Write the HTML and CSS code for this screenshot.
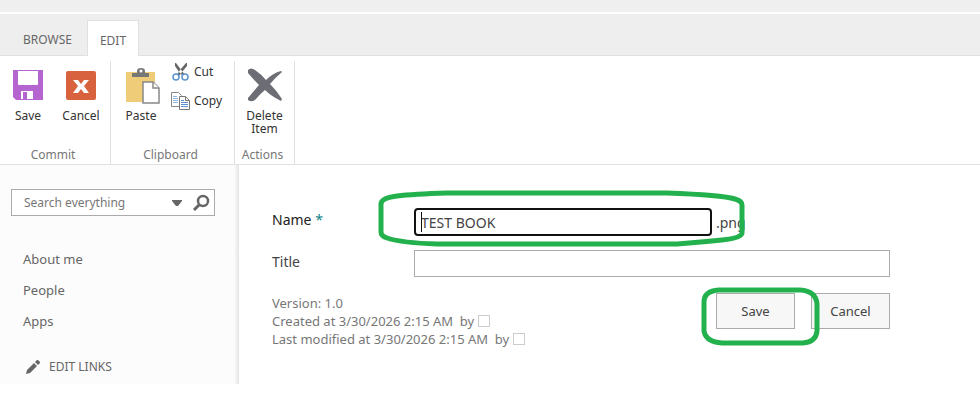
FILE: index.html
```html
<!DOCTYPE html>
<html lang="en">
<head>
    <meta charset="UTF-8">
    <meta name="viewport" content="width=device-width, initial-scale=1.0">
    <title>Edit Item</title>
    <link rel="stylesheet" href="styles.css">
</head>
<body>
    <div class="suite-bar"></div>

    <nav class="tabs">
        <a class="tab" href="#">BROWSE</a>
        <a class="tab tab-active" href="#">EDIT</a>
    </nav>

    <div class="ribbon">
        <section class="group group-commit">
            <div class="group-tools">
                <button type="button" class="tool tool-save">
                    <svg width="32" height="32" viewBox="0 0 32 32">
                        <path fill="#b565cf" d="M1 1h30v30H4l-3-3z"/>
                        <path fill="#fff" d="M6 2h20v13q0 1-1 1H7q-1 0-1-1z"/>
                        <path fill="#fff" d="M9 22h12v8H9z"/>
                        <path fill="#b565cf" d="M11 23h4v7h-4z"/>
                    </svg>
                    <span>Save</span>
                </button>
                <button type="button" class="tool tool-cancel">
                    <svg width="32" height="32" viewBox="0 0 32 32">
                        <rect x="1" y="2" width="30" height="29" rx="2" fill="#d8623e"/>
                        <path fill="#fff" d="M8 11h5l3 4 3-4h5l-5 6 5 7h-5l-3-4-3 4H8l5-7z"/>
                    </svg>
                    <span>Cancel</span>
                </button>
            </div>
            <div class="group-title">Commit</div>
        </section>

        <section class="group group-clipboard">
            <div class="group-tools">
                <button type="button" class="tool tool-paste">
                    <svg width="36" height="38" viewBox="0 0 36 38">
                        <path fill="#efcd78" d="M1 5h29v30H1z"/>
                        <path fill="#777" d="M7 10V6h5V4q0-3 4-3t4 3v2h4v4z"/>
                        <circle cx="16" cy="4" r="1.5" fill="#fff"/>
                        <path fill="#fff" stroke="#888" stroke-width="1.5" d="M18 15h10l6 6v15H18z"/>
                        <path fill="#fff" stroke="#888" stroke-width="1.5" d="M28 15v6h6"/>
                    </svg>
                    <span>Paste</span>
                </button>
                <div class="small-tools">
                    <button type="button" class="small-tool">
                        <svg width="20" height="20" viewBox="0 0 20 20">
                            <path fill="#666" d="M4 1h1l6 8 3 4h-3l-3-3-4-6zM16 1h-1l-6 7-3 5h3l2-3 5-6z"/>
                            <circle cx="5" cy="15" r="3" fill="none" stroke="#5c93cf" stroke-width="1.5"/>
                            <circle cx="14" cy="15" r="3" fill="none" stroke="#5c93cf" stroke-width="1.5"/>
                        </svg>
                        <span>Cut</span>
                    </button>
                    <button type="button" class="small-tool">
                        <svg width="20" height="20" viewBox="0 0 20 20">
                            <path fill="#fff" stroke="#888" d="M.5 1.5h7l3 3v11H.5z"/>
                            <path stroke="#8fb5de" d="M2 5.5h4M2 7.500h5M2 9.500h5M2 11.500h5"/>
                            <path fill="#fff" stroke="#777" d="M8.5 5.5h6l4 4v9h-10z"/>
                            <path fill="none" stroke="#777" d="M14.5 5.5v4h4"/>
                            <path stroke="#5c93cf" d="M10 9.500h3M10 11.500h7M10 13.500h7M10 15.500h7"/>
                        </svg>
                        <span>Copy</span>
                    </button>
                </div>
            </div>
            <div class="group-title">Clipboard</div>
        </section>

        <section class="group group-actions">
            <div class="group-tools">
                <button type="button" class="tool tool-delete">
                    <svg width="36" height="34" viewBox="0 0 36 34">
                        <path fill="#6d6d75" d="M1 2q3-3 7 0 6 4 11 10Q26 5 34 3l1 1Q29 9 23 16q7 7 12 15l-1 2q-10-5-16-11-5 4-9 9-4 4-8 1v-2Q7 23 12 17 6 11 1 5z"/>
                    </svg>
                    <span>Delete<br>Item</span>
                </button>
            </div>
            <div class="group-title">Actions</div>
        </section>
    </div>

    <div class="page">
        <aside class="sidebar">
            <form class="search">
                <input type="text" class="search-input" placeholder="Search everything" aria-label="Search everything">
                <button type="button" class="search-button" aria-label="Search scope">
                    <svg width="12" height="8" viewBox="0 0 12 8">
                        <path fill="#666" d="M1 1h10v1L7 7H5L1 2z"/>
                    </svg>
                </button>
                <button type="button" class="search-button" aria-label="Search">
                    <svg width="18" height="18" viewBox="0 0 18 18">
                        <circle cx="11" cy="7" r="5" fill="none" stroke="#666" stroke-width="2.5"/>
                        <path stroke="#666" stroke-width="3" d="M7 11l-5 5"/>
                    </svg>
                </button>
            </form>
            <nav class="links">
                <a href="#">About me</a>
                <a href="#">People</a>
                <a href="#">Apps</a>
            </nav>
            <a class="edit-links" href="#">
                <svg width="16" height="16" viewBox="0 0 16 16">
                    <path fill="#666" d="M1 15l1-4 7-7 3 3-7 7zM10 3l2-2h1l2 2v1l-2 2z"/>
                </svg>
                <span>EDIT LINKS</span>
            </a>
        </aside>

        <main class="content">
            <form class="item-form">
                <div class="field">
                    <label for="name">Name <span class="required">*</span></label>
                    <div class="name-box">
                        <input type="text" id="name" class="name-input" value="TEST BOOK">
                        <span class="caret"></span>
                        <span>.png</span>
                        <svg class="mark mark-name" width="368" height="58" viewBox="0 0 368 58">
                            <path d="M4 15Q4 9 20 7T70 4H290Q345 6 358 10 365 12 365 16V44Q365 49 345 51T300 55H60Q25 54 10 49 4 47 4 43z"/>
                        </svg>
                    </div>
                </div>
                <div class="field">
                    <label for="title">Title</label>
                    <input type="text" id="title" class="title-input">
                </div>
                <div class="form-footer">
                    <div class="info">
                        <div>Version: 1.0</div>
                        <div>Created at 3/30/2026 2:15 AM &nbsp;by <span class="presence"></span></div>
                        <div>Last modified at 3/30/2026 2:15 AM &nbsp;by <span class="presence"></span></div>
                    </div>
                    <div class="buttons">
                        <button type="button">Save</button>
                        <button type="button">Cancel</button>
                        <svg class="mark mark-save" width="120" height="60" viewBox="0 0 120 60">
                            <path d="M4 16Q4 5 19 4H100Q116 5 117 18V45Q116 56 103 57H22Q6 56 4 45z"/>
                        </svg>
                    </div>
                </div>
            </form>
        </main>
    </div>
</body>
</html>
```

FILE: styles.css
```css
* {
    box-sizing: border-box;
}
body {
    margin: 0;
    background: #fff;
    color: #444;
    font-family: "Noto Sans", "Open Sans", sans-serif;
    font-size: 13px;
}
a {
    color: #666;
    text-decoration: none;
}
button, input {
    font: inherit;
    color: inherit;
}
svg {
    display: block;
    flex: none;
}

/* Top bar and tabs */
.suite-bar {
    height: 14px;
    background: #efefef;
    border-bottom: 2px solid #fff;
}
.tabs {
    display: flex;
    align-items: flex-end;
    gap: 2px;
    height: 42px;
    padding-left: 10px;
    background: #eee;
    border-bottom: 1px solid #e0e0e0;
}
.tab {
    height: 35px;
    padding: 0 13px;
    font-size: 12px;
    line-height: 40px;
}
.tab-active {
    height: 36px;
    margin-bottom: -1px;
    padding: 0 12px;
    background: #fff;
    border: 1px solid #e0e0e0;
    border-bottom: none;
}

/* Ribbon */
.ribbon {
    display: flex;
    padding-top: 5px;
    border-bottom: 1px solid #e1e1e1;
    color: #333;
    font-size: 12px;
}
.group {
    display: flex;
    flex-direction: column;
    height: 103px;
    border-right: 1px solid #e1e1e1;
}
.group-tools {
    display: flex;
    flex: 1;
    align-items: flex-start;
}
.group-title {
    padding-right: 4px;
    color: #777;
    line-height: 18px;
    text-align: center;
}
.group-commit {
    width: 111px;
}
.group-clipboard {
    width: 124px;
}
.group-actions {
    width: 60px;
}
.tool {
    display: flex;
    flex-direction: column;
    align-items: center;
    padding: 8px 0 0;
    background: none;
    border: none;
    line-height: 13px;
    cursor: pointer;
}
.tool svg {
    margin-bottom: 8px;
}
.tool-save {
    width: 56px;
}
.tool-cancel {
    width: 50px;
}
.tool-paste {
    width: 60px;
    padding-top: 6px;
}
.tool-paste svg {
    margin: 0 0 4px 4px;
}
.tool-delete {
    width: 59px;
    padding-top: 7px;
}
.tool-delete svg {
    margin-bottom: 7px;
}
.small-tool {
    display: flex;
    align-items: center;
    gap: 3px;
    height: 29px;
    padding: 0;
    background: none;
    border: none;
    cursor: pointer;
}
.small-tools {
    margin-top: -4px;
}

/* Sidebar */
.page {
    display: flex;
}
.sidebar {
    flex: none;
    width: 239px;
    padding: 24px 24px 7px 11px;
    background: linear-gradient(to right, transparent 234px, #e4e4e4), #fcfcfc;
}
.search {
    display: flex;
    align-items: center;
    height: 27px;
    padding: 0 4px 0 12px;
    background: #fff;
    border: 1px solid #ababab;
}
.search-input {
    flex: 1;
    min-width: 0;
    padding: 0;
    border: none;
    outline: none;
    background: none;
    font-size: 12px;
}
.search-input::placeholder {
    color: #777;
}
.search-button {
    padding: 0;
    margin-left: 9px;
    background: none;
    border: none;
    cursor: pointer;
}
.links {
    display: flex;
    flex-direction: column;
    margin-top: 28px;
    padding-left: 12px;
    line-height: 31px;
}
.edit-links {
    display: flex;
    align-items: center;
    gap: 8px;
    margin-top: 20px;
    padding-left: 14px;
    font-size: 12px;
    line-height: 20px;
}

/* Form */
.content {
    flex: 1;
    padding: 43px 90px 0 33px;
}
.item-form {
    display: flex;
    flex-direction: column;
    gap: 14px;
}
.field {
    display: grid;
    grid-template-columns: 142px 1fr;
    font-size: 14px;
}
.field label {
    line-height: 23px;
}
.field:first-child label {
    color: #222;
}
.required {
    color: #0f8387;
}
.name-box {
    position: relative;
    display: flex;
    align-items: center;
    gap: 4px;
}
.name-input {
    width: 298px;
    height: 28px;
    padding: 0 5px;
    border: 2px solid #111;
    border-radius: 4px;
    outline: none;
}
.title-input {
    width: 100%;
    height: 27px;
    padding: 0 5px;
    border: 1px solid #ababab;
    outline: none;
}
.caret {
    position: absolute;
    top: 4px;
    left: 7px;
    width: 1px;
    height: 20px;
    background: #111;
}
.form-footer {
    display: flex;
    justify-content: space-between;
    align-items: flex-start;
    margin-top: 2px;
}
.info {
    margin-top: 1px;
    color: #777;
    line-height: 18px;
}
.presence {
    display: inline-block;
    width: 12px;
    height: 12px;
    border: 1px solid #ccc;
    vertical-align: -1px;
}
.buttons {
    position: relative;
    display: flex;
    gap: 16px;
}
.buttons button {
    width: 79px;
    height: 36px;
    padding: 0;
    background: #f7f7f7;
    border: 1px solid #ababab;
    cursor: pointer;
}

/* Hand-drawn green marks over the form */
.mark {
    position: absolute;
    pointer-events: none;
}
.mark path {
    fill: none;
    stroke: #22b14c;
    stroke-width: 5;
}
.mark-name {
    top: -19px;
    left: -37px;
}
.mark-save {
    top: -7px;
    left: -16px;
}
```
